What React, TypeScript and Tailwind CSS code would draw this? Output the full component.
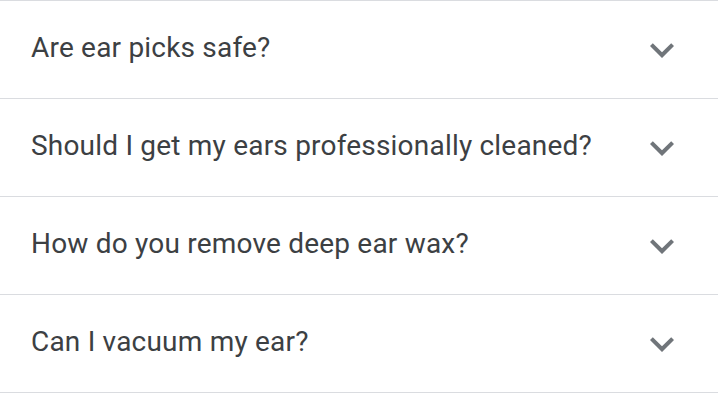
const QUESTIONS = [
  'Are ear picks safe?',
  'Should I get my ears professionally cleaned?',
  'How do you remove deep ear wax?',
  'Can I vacuum my ear?',
];

function ExpandMore() {
  return (
    <svg width="48" height="48" viewBox="0 0 24 24" className="fill-[#70757a]" aria-hidden="true">
      <path d="M16.59 8.59L12 13.17 7.41 8.59 6 10l6 6 6-6z" />
    </svg>
  );
}

export default function App() {
  return (
    <div className="w-[718px] h-[402px] bg-white font-['Roboto',sans-serif]">
      <div className="border-t border-[#dadce0]">
        {QUESTIONS.map((q) => (
          <div
            key={q}
            className="flex h-[98px] items-center justify-between border-b border-[#dadce0] pl-[31px] pr-[32px]"
          >
            <span className="pb-[3px] text-[28px] leading-none tracking-[0.2px] text-[#3c4043]">{q}</span>
            <ExpandMore />
          </div>
        ))}
      </div>
    </div>
  );
}
